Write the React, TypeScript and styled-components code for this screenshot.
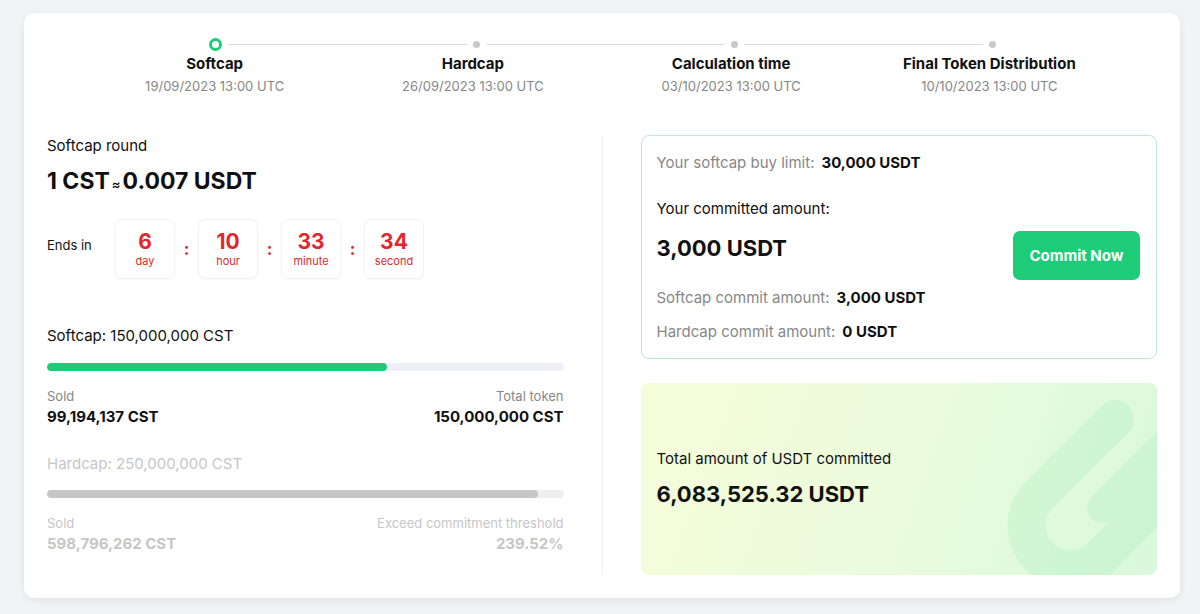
import React from 'react'
import styled, { createGlobalStyle } from 'styled-components'

const Colors = {
  BG: '#f2f3f5',
  TX1: '#111111',
  TX2: '#878787',
  TX3: '#c6c6c6',
  GREEN: '#1dcc78',
  RED: '#e3262b',
  LINE: '#dcdcdc',
}

const GlobalStyle = createGlobalStyle`
  html, body {
    margin: 0;
    padding: 0;
    background: ${Colors.BG};
    font-family: Inter, "Noto Sans", "Liberation Sans", sans-serif;
    color: ${Colors.TX1};
  }
  * { box-sizing: border-box; }
`

const Page = styled.div`
  padding: 13px 20px 16px 24px;
`

const Card = styled.div`
  width: 1156px;
  height: 585px;
  background: #fff;
  border-radius: 10px;
  box-shadow: 0 2px 8px rgba(0, 0, 0, 0.08);
  padding: 25px 23px 23px;
  display: flex;
  flex-direction: column;
`

/* ---------- stepper ---------- */

const Stepper = styled.div`
  width: 1033px;
  margin: 0 auto;
  display: flex;
  flex-direction: column;
`

const Track = styled.div`
  display: flex;
  align-items: center;
  height: 12px;
  margin: 0 123px;
`

const Dot = styled.span<{ $active?: boolean }>`
  flex: none;
  border-radius: 50%;
  ${(p) =>
    p.$active
      ? `width: 13px; height: 13px; border: 3px solid ${Colors.GREEN};`
      : `width: 7px; height: 7px; background: #c9c9c9;`}
`

const Line = styled.span`
  flex: 1;
  height: 1px;
  background: ${Colors.LINE};
  margin: 0 6px;
`

const Labels = styled.div`
  display: flex;
  margin-top: 4px;
`

const Step = styled.div`
  flex: 1;
  text-align: center;
`

const StepTitle = styled.div`
  font-size: 15px;
  line-height: 20px;
  font-weight: 700;
`

const StepDate = styled.div`
  margin-top: 3px;
  font-size: 13px;
  line-height: 18px;
  color: ${Colors.TX2};
`

/* ---------- columns ---------- */

const Columns = styled.div`
  flex: 1;
  margin-top: 40px;
  display: grid;
  grid-template-columns: 1fr 1px 1fr;
  column-gap: 38px;
`

const Divider = styled.div`
  background: #efefef;
`

const LeftCol = styled.div`
  display: flex;
  flex-direction: column;
  padding-top: 1px;
`

const Text = styled.div<{ $muted?: boolean; $mt?: number }>`
  font-size: 15px;
  line-height: 20px;
  margin-top: ${(p) => p.$mt ?? 0}px;
  color: ${(p) => (p.$muted ? Colors.TX3 : Colors.TX1)};
`

const Price = styled.div`
  margin-top: 10px;
  font-size: 23px;
  line-height: 30px;
  font-weight: 700;

  small {
    font-size: 13px;
    font-weight: 600;
    margin: 0 2px;
  }
`

const Countdown = styled.div`
  margin-top: 20px;
  display: flex;
  align-items: center;
`

const EndsIn = styled.span`
  font-size: 13px;
  width: 68px;
  margin-top: -8px;
`

const TimeBox = styled.div`
  width: 60px;
  height: 60px;
  border: 1px solid #f1f1f1;
  border-radius: 7px;
  box-shadow: 0 1px 3px rgba(0, 0, 0, 0.03);
  display: flex;
  flex-direction: column;
  align-items: center;
  justify-content: center;
  color: ${Colors.RED};

  b {
    font-size: 21px;
    line-height: 24px;
    font-weight: 700;
  }

  span {
    font-size: 11px;
    line-height: 14px;
  }
`

const Colon = styled.span`
  width: 23px;
  text-align: center;
  color: ${Colors.RED};
  font-weight: 700;
  font-size: 17px;
`

const Bar = styled.div<{ $track: string; $fill: string; $mt: number }>`
  margin-top: ${(p) => p.$mt}px;
  height: 8px;
  border-radius: 4px;
  background: ${(p) => p.$track};
  overflow: hidden;

  & > div {
    height: 100%;
    border-radius: 4px;
    background: ${(p) => p.$fill};
  }
`

const StatRow = styled.div<{ $muted?: boolean }>`
  margin-top: 16px;
  display: flex;
  justify-content: space-between;
  color: ${(p) => (p.$muted ? Colors.TX3 : Colors.TX1)};
`

const Stat = styled.div<{ $right?: boolean; $muted?: boolean }>`
  display: flex;
  flex-direction: column;
  align-items: ${(p) => (p.$right ? 'flex-end' : 'flex-start')};

  span {
    font-size: 13px;
    line-height: 18px;
    color: ${(p) => (p.$muted ? Colors.TX3 : Colors.TX2)};
  }

  b {
    margin-top: 2px;
    font-size: 15px;
    line-height: 20px;
    font-weight: 700;
  }
`

/* ---------- right column ---------- */

const RightCol = styled.div`
  display: flex;
  flex-direction: column;
  gap: 24px;
`

const CommitBox = styled.div`
  border: 1px solid #bfe9cf;
  border-radius: 8px;
  padding: 17px 16px 16px 15px;
  display: flex;
  flex-direction: column;
`

const InfoLine = styled.div<{ $mt?: number }>`
  margin-top: ${(p) => p.$mt ?? 0}px;
  font-size: 15px;
  line-height: 20px;
  color: ${Colors.TX2};

  b {
    color: ${Colors.TX1};
    font-weight: 700;
    margin-left: 7px;
  }
`

const CommitRow = styled.div`
  margin-top: 26px;
  display: flex;
  justify-content: space-between;
  align-items: center;
`

const CommitInfo = styled.div`
  display: flex;
  flex-direction: column;
`

const Label = styled.div`
  font-size: 15px;
  line-height: 20px;
`

const BigValue = styled.div<{ $mt?: number }>`
  margin-top: ${(p) => p.$mt ?? 14}px;
  font-size: 22px;
  line-height: 30px;
  font-weight: 700;
`

const CommitButton = styled.button`
  width: 127px;
  height: 49px;
  border: none;
  border-radius: 7px;
  background: ${Colors.GREEN};
  color: #fff;
  font-family: inherit;
  font-size: 15px;
  font-weight: 700;
  margin-top: 4px;
  cursor: pointer;
`

const TotalBox = styled.div`
  flex: 1;
  position: relative;
  overflow: hidden;
  border-radius: 8px;
  background: linear-gradient(110deg, #f6fcda 0%, #ecfcdc 45%, #d9f8dc 100%);
  padding: 0 16px;
  display: flex;
  flex-direction: column;
  justify-content: center;
`

const Deco = styled.svg`
  position: absolute;
  right: 0;
  top: 0;
  width: 180px;
  height: 193px;
`

const TotalText = styled.div`
  position: relative;
`

export default function App() {
  return (
    <>
      <GlobalStyle />
      <Page>
        <Card>
          <Stepper>
            <Track>
              <Dot $active />
              <Line />
              <Dot />
              <Line />
              <Dot />
              <Line />
              <Dot />
            </Track>
            <Labels>
              {[
                ['Softcap', '19/09/2023 13:00 UTC'],
                ['Hardcap', '26/09/2023 13:00 UTC'],
                ['Calculation time', '03/10/2023 13:00 UTC'],
                ['Final Token Distribution', '10/10/2023 13:00 UTC'],
              ].map(([t, d]) => (
                <Step key={t}>
                  <StepTitle>{t}</StepTitle>
                  <StepDate>{d}</StepDate>
                </Step>
              ))}
            </Labels>
          </Stepper>

          <Columns>
            <LeftCol>
              <Text>Softcap round</Text>
              <Price>
                1 CST<small>≈</small>0.007 USDT
              </Price>
              <Countdown>
                <EndsIn>Ends in</EndsIn>
                <TimeBox>
                  <b>6</b>
                  <span>day</span>
                </TimeBox>
                <Colon>:</Colon>
                <TimeBox>
                  <b>10</b>
                  <span>hour</span>
                </TimeBox>
                <Colon>:</Colon>
                <TimeBox>
                  <b>33</b>
                  <span>minute</span>
                </TimeBox>
                <Colon>:</Colon>
                <TimeBox>
                  <b>34</b>
                  <span>second</span>
                </TimeBox>
              </Countdown>

              <Text $mt={47}>Softcap: 150,000,000 CST</Text>
              <Bar $track="#efeff8" $fill={Colors.GREEN} $mt={17}>
                <div style={{ width: '65.9%' }} />
              </Bar>
              <StatRow>
                <Stat>
                  <span>Sold</span>
                  <b>99,194,137 CST</b>
                </Stat>
                <Stat $right>
                  <span>Total token</span>
                  <b>150,000,000 CST</b>
                </Stat>
              </StatRow>

              <Text $muted $mt={27}>
                Hardcap: 250,000,000 CST
              </Text>
              <Bar $track="#eeeeee" $fill="#c6c6c6" $mt={16}>
                <div style={{ width: '95%' }} />
              </Bar>
              <StatRow $muted>
                <Stat $muted>
                  <span>Sold</span>
                  <b>598,796,262 CST</b>
                </Stat>
                <Stat $right $muted>
                  <span>Exceed commitment threshold</span>
                  <b>239.52%</b>
                </Stat>
              </StatRow>
            </LeftCol>

            <Divider />

            <RightCol>
              <CommitBox>
                <InfoLine>
                  Your softcap buy limit:<b>30,000 USDT</b>
                </InfoLine>
                <CommitRow>
                  <CommitInfo>
                    <Label>Your committed amount:</Label>
                    <BigValue>3,000 USDT</BigValue>
                    <InfoLine $mt={25}>
                      Softcap commit amount:<b>3,000 USDT</b>
                    </InfoLine>
                  </CommitInfo>
                  <CommitButton>Commit Now</CommitButton>
                </CommitRow>
                <InfoLine $mt={14}>
                  Hardcap commit amount:<b>0 USDT</b>
                </InfoLine>
              </CommitBox>

              <TotalBox>
                <Deco viewBox="0 0 180 193">
                  <g opacity="0.12" fill="none" stroke="#5fd88a" strokeLinecap="round">
                    <path
                      d="M 138 36 L 60 114 A 44 44 0 0 0 122 176 L 230 68"
                      strokeWidth="38"
                    />
                    <path d="M 125 125 L 215 35" strokeWidth="30" />
                  </g>
                </Deco>
                <TotalText>
                  <Text>Total amount of USDT committed</Text>
                  <BigValue $mt={10}>6,083,525.32 USDT</BigValue>
                </TotalText>
              </TotalBox>
            </RightCol>
          </Columns>
        </Card>
      </Page>
    </>
  )
}
